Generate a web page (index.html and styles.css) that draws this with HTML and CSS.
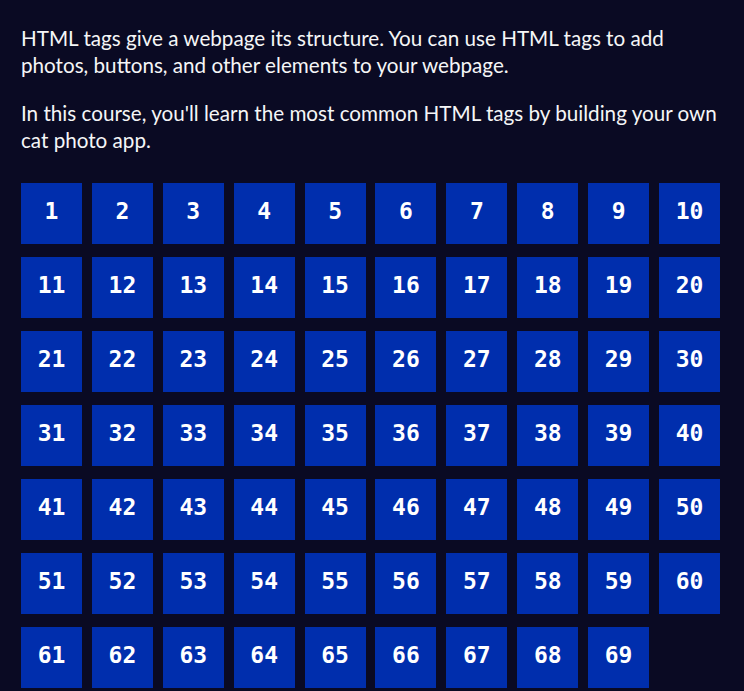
FILE: index.html
```html
<!DOCTYPE html>
<html>
<head>
<meta charset="utf-8">
<link rel="stylesheet" href="styles.css">
</head>
<body>
<main class="page">
<p class="intro">HTML tags give a webpage its structure. You can use HTML tags to add photos, buttons, and other elements to your webpage.</p>
<p class="intro">In this course, you'll learn the most common HTML tags by building your own cat photo app.</p>
<div class="grid" id="grid"></div>
</main>
<script src="script.js"></script>
</body>
</html>
```
FILE: styles.css
```css
html, body {
  margin: 0;
  padding: 0;
  background: #0a0a23;
  overflow: hidden;
}
.page {
  padding: 25px 18px 0 21px;
  font-family: Lato, "Noto Sans", sans-serif;
  color: #f5f6f7;
}
.intro {
  margin: 0 0 21px 0;
  font-size: 20.65px;
  line-height: 27px;
}
.grid {
  display: grid;
  grid-template-columns: repeat(10, 61px);
  column-gap: 9.9px;
  row-gap: 13px;
  margin-top: 29px;
}
.cell {
  height: 61px;
  box-sizing: border-box;
  padding-bottom: 5px;
  background: #002ead;
  color: #ffffff;
  display: flex;
  align-items: center;
  justify-content: center;
  font-family: "DejaVu Sans Mono", monospace;
  font-weight: bold;
  font-size: 23px;
}
```
FILE: script.js
```js
var g = document.getElementById('grid');
for (var i = 1; i <= 69; i++) {
  var d = document.createElement('div');
  d.className = 'cell';
  d.textContent = i;
  g.appendChild(d);
}
```
